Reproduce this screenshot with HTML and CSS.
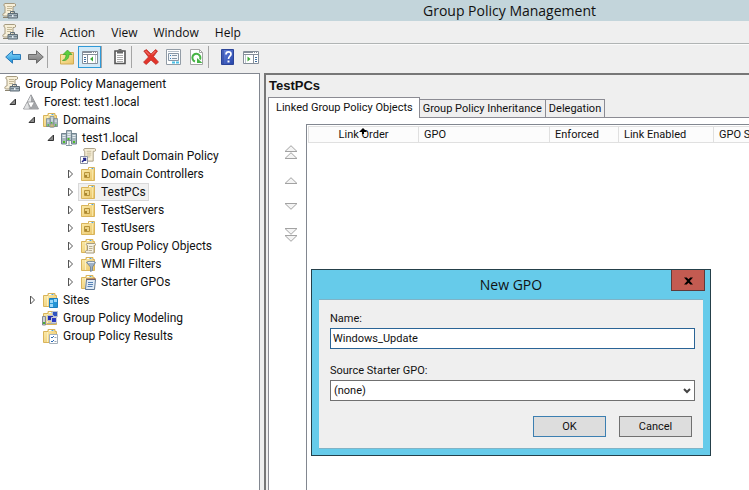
FILE: index.html
```html
<!DOCTYPE html>
<html lang="en">

<head>
  <meta charset="UTF-8" />
  <meta name="viewport" content="width=device-width, initial-scale=1.0" />
  <title>Group Policy Management</title>
  <link rel="stylesheet" href="styles.css">
</head>

<body>
  <!-- icon sprites -->
  <svg class="sprites" aria-hidden="true">
    <defs>
      <linearGradient id="g-blue" x1="0" y1="0" x2="0" y2="1">
        <stop offset="0" stop-color="#8fdcfa" />
        <stop offset="1" stop-color="#1b8fd8" />
      </linearGradient>
      <linearGradient id="g-gray" x1="0" y1="0" x2="0" y2="1">
        <stop offset="0" stop-color="#b5b5b5" />
        <stop offset="1" stop-color="#777" />
      </linearGradient>
      <linearGradient id="g-folder" x1="0" y1="0" x2="1" y2="1">
        <stop offset="0" stop-color="#fdeeb0" />
        <stop offset="1" stop-color="#e9c467" />
      </linearGradient>
      <linearGradient id="g-help" x1="0" y1="0" x2="1" y2="1">
        <stop offset="0" stop-color="#6b86e0" />
        <stop offset="1" stop-color="#2343a8" />
      </linearGradient>
    </defs>

    <symbol id="i-scroll" viewBox="0 0 16 16">
      <path d="M4 .5h10.500c1.500 0 1.500 3 0 3H13v10.500H1.500c-1.300-1-.6-3 1-3H4V3.500C2.500 3.500 2.500.5 4 .5z" fill="#f7efd8" stroke="#a69b80" />
      <path d="M6 3.500h5M6 5.500h5M6 7.500h5M6 9.500h4" stroke="#c4b998" />
    </symbol>
    <symbol id="i-gpm" viewBox="0 0 16 16">
      <path d="M3 .5h9.500c1.500 0 1.500 3 0 3H11v9.500H1.500c-1.300-1-.6-3 1-3H3V3.500C1.500 3.500 1.500.5 3 .5z" fill="#f7efd8" stroke="#a69b80" />
      <path d="M5 3.500h5M5 5.500h5M5 7.500h4" stroke="#c4b998" />
      <path d="M1 14.500h5" stroke="#8c846f" />
      <path d="M8.500 10.500v-2h4v2" fill="none" stroke="#5e6d76" />
      <path d="M6 10.500h9.500v4.500H6z" fill="#a3b2bb" stroke="#5e6d76" />
      <path d="M6.500 12.500h8.500" stroke="#6d7d87" />
      <path d="M10 12h1.500v2H10z" fill="#e6edf1" />
    </symbol>
    <symbol id="i-folder" viewBox="0 0 16 16">
      <path d="M1.500 3.500h4.500V1.500h7v2h1.500v11h-13z" fill="url(#g-folder)" stroke="#d9b45b" />
      <path d="M7 2.500h5" stroke="#fff" />
      <path d="M9.500 2.500h2" stroke="#55a5d8" />
      <path d="M5.500 4v10" stroke="#fbf0c3" />
    </symbol>
    <symbol id="i-ou" viewBox="0 0 16 16">
      <path d="M1.500 3.500h7V1.500h6v13h-13z" fill="url(#g-folder)" stroke="#d9b45b" />
      <path d="M9 2.500h5" stroke="#fff" />
      <path d="M11.500 2.500h2" stroke="#55a5d8" />
      <path d="M12.500 4v10" stroke="#f8e6a5" />
      <path d="M4.500 6.500h5v5h-5z" fill="#ecd281" stroke="#b8943a" />
      <path d="M5 9h2v2H5z" fill="#a8862f" />
    </symbol>
    <symbol id="i-forest" viewBox="0 0 16 16">
      <path d="M8 .8l7.500 14.200H.5z" fill="#b9bbbd" stroke="#85878a" stroke-width=".8" />
      <path d="M8 1.500L4.500 8 8 8z" fill="#e8e9ea" />
      <path d="M4.500 8L1 14.700h5z" fill="#e0e1e2" />
      <path d="M8 1.500L11.500 8H8zM11.500 8.500l3 6H8.500z" fill="#a3a5a8" />
      <path d="M4.500 8h7L8 14.500z" fill="#fff" stroke="#85878a" stroke-width=".7" />
    </symbol>
    <symbol id="i-servers" viewBox="0 0 16 16">
      <path d="M5.500.5h5v10h-5z" fill="#b3c0c7" stroke="#7c8d97" />
      <path d="M6.500 2.500h3M6.500 4.500h3M6.500 6.500h3" stroke="#e6eef2" />
      <path d="M6.500 8h2v2h-2z" fill="#4cbb2a" />
      <path d="M.5 3.500h5v10.500h-5zM10.500 3.500h5v10.500h-5z" fill="#a6b5bd" stroke="#718490" />
      <path d="M1.500 5.500h3M1.500 7.500h3M11.500 5.500h3M11.500 7.500h3" stroke="#e6eef2" />
      <path d="M2 11h2v2H2zM12 11h2v2h-2z" fill="#4cbb2a" />
      <path d="M8 10.500v5M5 15.500h6" stroke="#8596a0" />
    </symbol>
    <symbol id="i-domains" viewBox="0 0 16 16">
      <use href="#i-folder" />
      <use href="#i-servers" x="4" y="4" width="12" height="12" />
    </symbol>
    <symbol id="i-link" viewBox="0 0 16 16">
      <use href="#i-scroll" x="1" y="0" width="15" height="15" />
      <path d="M.5 8.500h7v7h-7z" fill="#fff" stroke="#8d93a5" />
      <path d="M2 14l3-3M3 10.500h2.500v2.500" fill="none" stroke="#262a8c" stroke-width="1.500" />
    </symbol>
    <symbol id="i-gpos" viewBox="0 0 16 16">
      <use href="#i-folder" />
      <path d="M7 5.500h7.500c1.500 0 1.500 2 0 2H14v7.500H6.500c-1.500 0-1.500-2.500 0-2.500h1V7.500C6 7.500 6 5.500 7 5.500z" fill="#f5f1e2" stroke="#a69b80" />
      <path d="M9 8.500h3.500M9 10.500h3.500M8.500 12.500h3.500" stroke="#b9af93" />
    </symbol>
    <symbol id="i-wmi" viewBox="0 0 16 16">
      <use href="#i-folder" />
      <path d="M6.500 6.500c0-1.500 9-1.500 9 0L12.500 11v3.500l-2 1V11z" fill="#9fb1c6" stroke="#6b7f96" stroke-width=".8" />
      <path d="M8 6.500h6" stroke="#e5edf5" />
    </symbol>
    <symbol id="i-starter" viewBox="0 0 16 16">
      <use href="#i-folder" />
      <path d="M6.500 5.500h9l-1 10h-9z" fill="#dfeaf5" stroke="#5f7896" />
      <path d="M6 5h10" stroke="#8a5140" />
      <path d="M8 8.500h5M8 10.500h5M7.500 12.500h5" stroke="#5480b5" />
    </symbol>
    <symbol id="i-sites" viewBox="0 0 16 16">
      <use href="#i-folder" />
      <path d="M7.500 6.500h8v9h-8z" fill="#2595d6" stroke="#1c7dbd" />
      <path d="M8 8h3v3H8zM12 7h3v3h-3zM8 12h3v3H8z" fill="#9bd8fa" />
    </symbol>
    <symbol id="i-modeling" viewBox="0 0 16 16">
      <use href="#i-folder" />
      <path d="M10.500 1.500h5v5h-5z" fill="#2f54c0" stroke="#bcc2cd" />
      <path d="M5.500 5.500h6v5h-6z" fill="#232fb0" stroke="#bcc2cd" />
      <path d="M9.500 7.500h5v5h-5z" fill="#2c3bc0" stroke="#c9ced8" />
      <path d="M.5 6.500h3v8.500h-3z" fill="#ccd1d6" stroke="#858b94" />
      <path d="M1 12h2v2H1z" fill="#48ad35" />
      <path d="M5 13.500h9" stroke="#a5abb3" />
    </symbol>
    <symbol id="i-results" viewBox="0 0 16 16">
      <use href="#i-folder" />
      <path d="M7.500 6.500h8v9h-8z" fill="#fff" stroke="#a4b0bb" />
      <path d="M9 9l1 1 2-2M9 13l1 1 2-2" fill="none" stroke="#2e6bb5" />
      <path d="M12.500 9.500h2M12.500 13.500h2" stroke="#9aa7b3" />
    </symbol>

    <symbol id="i-back" viewBox="0 0 16 16">
      <path d="M.7 8L7.500 1.800v3.700h8v5h-8v3.700z" fill="url(#g-blue)" stroke="#2a7ab8" />
    </symbol>
    <symbol id="i-forward" viewBox="0 0 16 16">
      <path d="M15.300 8L8.500 1.800v3.700h-8v5h8v3.700z" fill="url(#g-gray)" stroke="#6a6a6a" />
    </symbol>
    <symbol id="i-up" viewBox="0 0 16 16">
      <path d="M1.500 5.500h6l1-2h6v11.500h-13z" fill="url(#g-folder)" stroke="#d1ab52" />
      <path d="M3.500 11.500c3-1 3.500-3.500 3.500-6H4L8.500 1l4.500 4.500h-3c0 4-2.500 6.500-6.500 6z" fill="#5ccf3d" stroke="#3fa02f" stroke-width=".7" />
    </symbol>
    <symbol id="i-pane-left" viewBox="0 0 16 16">
      <path d="M.5 2.500h15v12H.5z" fill="#fff" stroke="#858e9a" />
      <path d="M0 3.500h16M0 5.500h16" stroke="#858e9a" />
      <path d="M10 3.500h1M12 3.500h1M14 3.500h1" stroke="#fff" />
      <path d="M5.500 6v8" stroke="#858e9a" />
      <path d="M2 8.500h2M2 10.500h2M2 12.500h2" stroke="#3c6d9e" />
      <path d="M11 7.500v5L8 10z" fill="#3da836" />
      <path d="M13.500 6v8" stroke="#bcc5ce" />
    </symbol>
    <symbol id="i-pane-right" viewBox="0 0 16 16">
      <path d="M.5 2.500h15v12H.5z" fill="#fff" stroke="#858e9a" />
      <path d="M0 3.500h16M0 5.500h16" stroke="#858e9a" />
      <path d="M10 3.500h1M12 3.500h1M14 3.500h1" stroke="#fff" />
      <path d="M10.500 6v8" stroke="#858e9a" />
      <path d="M12 8.500h2M12 10.500h2M12 12.500h2" stroke="#3c6d9e" />
      <path d="M4.500 7.500v5l3-2.500z" fill="#3da836" />
      <path d="M2.500 6v8" stroke="#bcc5ce" />
    </symbol>
    <symbol id="i-clipboard" viewBox="0 0 16 16">
      <path d="M3 2h10v12.500H3z" fill="#fff" stroke="#555" stroke-width="1.600" />
      <path d="M5 1.500h6v3H5z" fill="#666" />
      <path d="M6.500 .5h3" stroke="#666" />
      <path d="M5 6.500h6M5 8.500h6M5 10.500h6M5 12.500h6" stroke="#aaa" />
    </symbol>
    <symbol id="i-delete" viewBox="0 0 16 16">
      <path d="M.8 2L3.500.6 8 5l4.500-4.400L14.500 2 10.500 7.500l5 5.500-2.500 2.500L8 11l-4.800 4.500L.5 13.200 5.500 8z" fill="#e2352b" stroke="#b92a22" stroke-width=".7" />
      <path d="M2.500 2l4 4M12.500 2L9 5.500" stroke="#f58a80" />
    </symbol>
    <symbol id="i-props" viewBox="0 0 16 16">
      <path d="M.5.500h14v15H.5z" fill="#fff" stroke="#929ca6" />
      <path d="M2 2.500h11" stroke="#b4bec8" />
      <path d="M2.500 4.500h10v7h-10z" fill="#f2f6f9" stroke="#8796a5" />
      <path d="M4 6.500h1M4 9.500h1" stroke="#2f7fc4" />
      <path d="M6 6.500h5M6 9.500h5" stroke="#8796a5" />
      <path d="M6 13.500h3M10 13.500h3" stroke="#49bfe5" stroke-width="2" />
    </symbol>
    <symbol id="i-refresh" viewBox="0 0 16 16">
      <path d="M1.500.5h9l3 3v12h-12z" fill="#fff" stroke="#a5a5a5" />
      <path d="M10.500.5v3h3" fill="none" stroke="#a5a5a5" />
      <path d="M6 12.500a4 4 0 1 1 5-2" fill="none" stroke="#46b344" stroke-width="2" />
      <path d="M8 9v5h5.500z" fill="#46b344" />
    </symbol>
    <symbol id="i-help" viewBox="0 0 16 16">
      <path d="M1.500.5h12v15h-12z" fill="url(#g-help)" stroke="#2c4498" />
      <path d="M3 1v14" stroke="#2c4498" />
      <path d="M6 5.500c0-3.500 5-3.200 5-.3 0 2-2.500 2-2.500 4.800" fill="none" stroke="#fff" stroke-width="1.700" />
      <path d="M7.500 11.500h2v2h-2z" fill="#fff" />
    </symbol>

    <symbol id="i-open" viewBox="0 0 8 8">
      <path d="M6.500 1v5.500H1z" fill="#8b8b8b" stroke="#333" />
    </symbol>
    <symbol id="i-closed" viewBox="0 0 8 10">
      <path d="M2.500 1v8l4-4z" fill="#fff" stroke="#555" />
    </symbol>
    <symbol id="i-tri" viewBox="0 0 14 7">
      <path d="M1 6.500L7 .7l6 5.800z" fill="#f4f4f4" stroke="#a2a2a2" />
    </symbol>
  </svg>

  <header class="titlebar">
    <svg class="icon"><use href="#i-gpm" /></svg>
    <h1>Group Policy Management</h1>
  </header>

  <nav class="menubar">
    <svg class="icon"><use href="#i-gpm" /></svg>
    <button type="button">File</button>
    <button type="button">Action</button>
    <button type="button">View</button>
    <button type="button">Window</button>
    <button type="button">Help</button>
  </nav>

  <div class="toolbar">
    <button type="button" aria-label="Back"><svg class="icon"><use href="#i-back" /></svg></button>
    <button type="button" aria-label="Forward"><svg class="icon"><use href="#i-forward" /></svg></button>
    <span class="sep"></span>
    <button type="button" aria-label="Up one level"><svg class="icon"><use href="#i-up" /></svg></button>
    <button type="button" class="pressed" aria-label="Show console tree"><svg class="icon"><use href="#i-pane-left" /></svg></button>
    <span class="sep"></span>
    <button type="button" aria-label="Paste"><svg class="icon"><use href="#i-clipboard" /></svg></button>
    <span class="sep"></span>
    <button type="button" aria-label="Delete"><svg class="icon"><use href="#i-delete" /></svg></button>
    <button type="button" aria-label="Properties"><svg class="icon"><use href="#i-props" /></svg></button>
    <button type="button" aria-label="Refresh"><svg class="icon"><use href="#i-refresh" /></svg></button>
    <span class="sep"></span>
    <button type="button" aria-label="Help"><svg class="icon"><use href="#i-help" /></svg></button>
    <button type="button" aria-label="Show action pane"><svg class="icon"><use href="#i-pane-right" /></svg></button>
  </div>

  <main class="console">
    <aside class="tree">
      <div class="row"><span class="node"><svg class="icon"><use href="#i-gpm" /></svg>Group Policy Management</span></div>
      <ul>
        <li>
          <div class="row"><svg class="open"><use href="#i-open" /></svg><span class="node"><svg class="icon"><use href="#i-forest" /></svg>Forest: test1.local</span></div>
          <ul>
            <li>
              <div class="row"><svg class="open"><use href="#i-open" /></svg><span class="node"><svg class="icon"><use href="#i-domains" /></svg>Domains</span></div>
              <ul>
                <li>
                  <div class="row"><svg class="open"><use href="#i-open" /></svg><span class="node"><svg class="icon"><use href="#i-servers" /></svg>test1.local</span></div>
                  <ul>
                    <li class="row leaf"><span class="node"><svg class="icon"><use href="#i-link" /></svg>Default Domain Policy</span></li>
                    <li class="row"><svg class="closed"><use href="#i-closed" /></svg><span class="node"><svg class="icon"><use href="#i-ou" /></svg>Domain Controllers</span></li>
                    <li class="row"><svg class="closed"><use href="#i-closed" /></svg><span class="node selected"><svg class="icon"><use href="#i-ou" /></svg>TestPCs</span></li>
                    <li class="row"><svg class="closed"><use href="#i-closed" /></svg><span class="node"><svg class="icon"><use href="#i-ou" /></svg>TestServers</span></li>
                    <li class="row"><svg class="closed"><use href="#i-closed" /></svg><span class="node"><svg class="icon"><use href="#i-ou" /></svg>TestUsers</span></li>
                    <li class="row"><svg class="closed"><use href="#i-closed" /></svg><span class="node"><svg class="icon"><use href="#i-gpos" /></svg>Group Policy Objects</span></li>
                    <li class="row"><svg class="closed"><use href="#i-closed" /></svg><span class="node"><svg class="icon"><use href="#i-wmi" /></svg>WMI Filters</span></li>
                    <li class="row"><svg class="closed"><use href="#i-closed" /></svg><span class="node"><svg class="icon"><use href="#i-starter" /></svg>Starter GPOs</span></li>
                  </ul>
                </li>
              </ul>
            </li>
            <li class="row"><svg class="closed"><use href="#i-closed" /></svg><span class="node"><svg class="icon"><use href="#i-sites" /></svg>Sites</span></li>
            <li class="row leaf"><span class="node"><svg class="icon"><use href="#i-modeling" /></svg>Group Policy Modeling</span></li>
            <li class="row leaf"><span class="node"><svg class="icon"><use href="#i-results" /></svg>Group Policy Results</span></li>
          </ul>
        </li>
      </ul>
    </aside>

    <section class="details">
      <h2>TestPCs</h2>
      <div class="tabs" role="tablist">
        <button type="button" role="tab" class="tab active" aria-selected="true">Linked Group Policy Objects</button>
        <button type="button" role="tab" class="tab">Group Policy Inheritance</button>
        <button type="button" role="tab" class="tab">Delegation</button>
      </div>
      <div class="panel">
        <div class="order">
          <button type="button" aria-label="Move to top"><svg><use href="#i-tri" /></svg><svg><use href="#i-tri" /></svg></button>
          <button type="button" aria-label="Move up"><svg><use href="#i-tri" /></svg></button>
          <button type="button" class="down" aria-label="Move down"><svg><use href="#i-tri" /></svg></button>
          <button type="button" class="down" aria-label="Move to bottom"><svg><use href="#i-tri" /></svg><svg><use href="#i-tri" /></svg></button>
        </div>
        <div class="list">
          <table>
            <thead>
              <tr>
                <th class="col-order">Link Order<svg class="sort" viewBox="0 0 8 6"><path d="M4 0l4 4H5v2H3V4H0z" /></svg></th>
                <th class="col-gpo">GPO</th>
                <th class="col-enforced">Enforced</th>
                <th class="col-enabled">Link Enabled</th>
                <th class="col-status">GPO Status</th>
              </tr>
            </thead>
            <tbody></tbody>
          </table>
        </div>
      </div>
    </section>
  </main>

  <div class="dialog" role="dialog" aria-labelledby="dialog-title">
    <h2 id="dialog-title">New GPO</h2>
    <button type="button" class="close" aria-label="Close">
      <svg viewBox="0 0 10 8"><path d="M0 0h3l2 2 2-2h3L6.500 4 10 8H7L5 6 3 8H0l3.500-4z" /></svg>
    </button>
    <form class="dialog-body">
      <label for="name">Name:</label>
      <input type="text" id="name" value="Windows_Update">
      <label for="source">Source Starter GPO:</label>
      <div class="select">
        <select id="source">
          <option>(none)</option>
        </select>
        <svg viewBox="0 0 8 6"><path d="M1 1l3 3 3-3" /></svg>
      </div>
      <div class="actions">
        <button type="button" class="default">OK</button>
        <button type="button">Cancel</button>
      </div>
    </form>
  </div>
</body>

</html>
```
FILE: styles.css
```css
* {
  box-sizing: border-box;
}

body {
  display: flex;
  flex-direction: column;
  height: 100vh;
  margin: 0;
  overflow: hidden;
  background: #efefef;
  color: #111;
  font-family: "Open Sans", "Segoe UI", sans-serif;
  font-size: 12px;
}

button {
  padding: 0;
  border: 0;
  background: none;
  color: inherit;
  font: inherit;
}

h1,
h2,
ul {
  margin: 0;
  padding: 0;
}

ul {
  list-style: none;
}

.sprites {
  position: absolute;
  width: 0;
  height: 0;
}

.icon {
  flex: none;
  width: 16px;
  height: 16px;
}

/* title, menu and toolbar */
.titlebar {
  display: flex;
  align-items: center;
  height: 21px;
  padding-left: 2px;
  background: #c3d5db;
}

.titlebar h1 {
  margin-left: 405px;
  font-size: 14px;
  font-weight: 400;
  line-height: 18px;
  white-space: nowrap;
}

.menubar {
  display: flex;
  align-items: center;
  gap: 16px;
  height: 23px;
  padding-left: 2px;
  border-bottom: 1px solid #b0b4b4;
}

.menubar .icon {
  margin-right: -9px;
}

.toolbar {
  display: flex;
  align-items: center;
  height: 29px;
  padding: 0 0 5px 1px;
  border-top: 1px solid #fafafa;
}

.toolbar button {
  display: flex;
  align-items: center;
  justify-content: center;
  width: 23px;
  height: 22px;
}

.toolbar .pressed {
  border: 1px solid #2f9ad8;
  background: #d3e9f7;
}

.toolbar .sep {
  width: 1px;
  height: 22px;
  margin-right: 7px;
  background: #a5a5a5;
}

.toolbar .pressed + .sep {
  margin-right: 6px;
}

/* console tree */
.console {
  display: flex;
  flex: 1;
  min-height: 0;
}

.tree {
  flex: none;
  width: 260px;
  padding: 1px 0 0 2px;
  border: 1px solid #828790;
  border-width: 1px 1px 0 0;
  background: #fff;
  font-family: Roboto, "Segoe UI", sans-serif;
}

.tree ul ul {
  padding-left: 19px;
}

.row {
  display: flex;
  align-items: center;
  height: 18px;
}

.leaf {
  padding-left: 19px;
}

.open,
.closed {
  flex: none;
  width: 8px;
  height: 8px;
  margin: 0 4px 0 7px;
}

.closed {
  height: 10px;
}

.node {
  display: flex;
  align-items: center;
  gap: 5px;
  height: 18px;
  padding: 0 2px 0 1px;
  border: 1px solid transparent;
  white-space: nowrap;
}

.selected {
  border-color: #d9d9d9;
  background: #f1f1f1;
}

/* details pane */
.details {
  display: flex;
  flex: 1;
  flex-direction: column;
  min-width: 0;
  margin-left: 4px;
  padding-left: 2px;
  border-top: 2px solid #777;
  border-left: 2px solid #777;
  font-family: Roboto, Arial, sans-serif;
  font-size: 11px;
}

.details h2 {
  padding-left: 1px;
  font-family: "Liberation Sans", Arial, sans-serif;
  font-size: 13px;
  line-height: 22px;
}

.tabs {
  display: flex;
  align-items: flex-end;
  height: 20px;
}

.tab {
  height: 18px;
  padding: 0 3px;
  border: 1px solid #8b8b93;
  border-bottom: 0;
  white-space: nowrap;
}

.tab + .tab {
  border-left-width: 0;
}

.tab.active {
  z-index: 1;
  height: 21px;
  margin-bottom: -1px;
  padding: 0 6px 1px 7px;
  background: #fff;
}

.panel {
  display: flex;
  flex: 1;
  padding-top: 6px;
  border: 1px solid #8b8b93;
  border-width: 1px 0 0 1px;
  background: #fff;
}

.order {
  display: flex;
  flex: none;
  flex-direction: column;
  align-items: center;
  gap: 17px;
  width: 37px;
  padding: 21px 0 0 7px;
}

.order button {
  display: flex;
  flex-direction: column;
  justify-content: center;
  min-height: 9px;
}

.order .down {
  transform: rotate(180deg);
}

.order svg {
  width: 14px;
  height: 7px;
}

.list {
  flex: 1;
  min-width: 0;
  padding: 1px 0 0 1px;
  border: 1px solid #828790;
  border-width: 1px 0 0 1px;
  overflow: hidden;
}

.list table {
  width: 530px;
  border-collapse: collapse;
  table-layout: fixed;
}

.list th {
  position: relative;
  height: 16px;
  padding: 0 5px;
  border: 1px solid #e0e0e0;
  background: #fcfcfc;
  font-weight: 400;
  text-align: left;
  white-space: nowrap;
}

.list .col-order {
  width: 110px;
  text-align: center;
}

.col-gpo {
  width: 131px;
}

.col-enforced {
  width: 69px;
}

.col-enabled {
  width: 95px;
}

.sort {
  position: absolute;
  top: 1px;
  left: 50px;
  width: 8px;
  height: 6px;
}

/* new GPO dialog, floats above the console */
.dialog {
  position: absolute;
  top: 269px;
  left: 311px;
  width: 400px;
  padding: 0 7px 6px;
  border: 1px solid #25404a;
  background: #66cbea;
}

.dialog h2 {
  font-size: 14px;
  font-weight: 400;
  line-height: 29px;
  text-align: center;
}

.close {
  position: absolute;
  top: 0;
  right: 5px;
  width: 34px;
  height: 21px;
  border: 1px solid #5f3a3a;
  border-top: 0;
  background: #c35b51;
}

.close svg {
  width: 9px;
  height: 8px;
}

.dialog-body {
  display: flex;
  flex-direction: column;
  padding: 10px 8px 11px 11px;
  border: 1px solid #7fb3c6;
  border-width: 1px 0;
  background: #efefef;
  font-family: Roboto, Arial, sans-serif;
  font-size: 11px;
}

.dialog-body label {
  line-height: 18px;
}

.dialog-body input,
.dialog-body select {
  width: 100%;
  height: 21px;
  padding: 0 2px;
  border: 1px solid #2a6496;
  border-radius: 0;
  outline: 0;
  background: #fff;
  color: inherit;
  font: inherit;
}

.dialog-body input {
  margin-bottom: 13px;
}

.dialog-body select {
  display: block;
  padding: 0 3px;
  border-color: #707070;
  appearance: none;
}

.select {
  position: relative;
}

.select svg {
  position: absolute;
  top: 8px;
  right: 4px;
  width: 8px;
  height: 6px;
  fill: none;
  stroke: #444;
  stroke-width: 2;
}

.actions {
  display: flex;
  justify-content: flex-end;
  gap: 13px;
  padding: 15px 3px 0 0;
}

.actions button {
  width: 73px;
  height: 21px;
  border: 1px solid #707070;
  background: #ddd;
}

.actions .default {
  border-color: #3c7fb1;
}
```
